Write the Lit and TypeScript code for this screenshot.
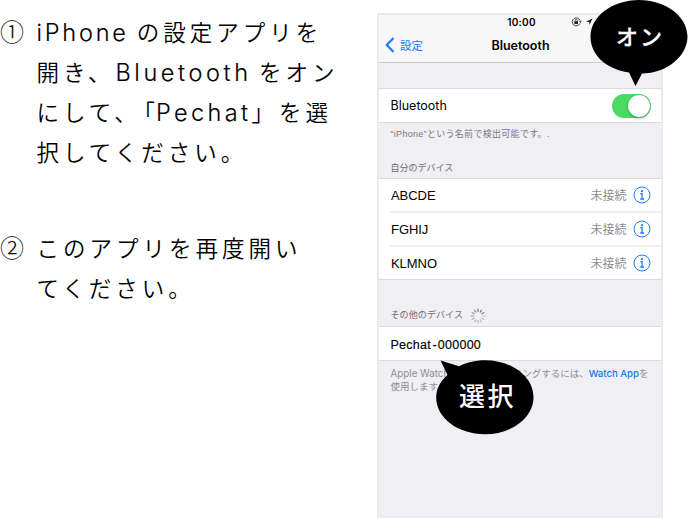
import { LitElement, html, css, svg } from "lit";
import { customElement, property } from "lit/decorators.js";

@customElement("speech-bubble")
class SpeechBubble extends LitElement {
  @property() kind = "on";
  static styles = css`
    :host { display: block; position: relative; color: #fff; }
    svg { display: block; }
    .label { position: absolute; inset: 0; display: flex; justify-content: center; line-height: 32px; font-weight: 500; white-space: nowrap; }
    .on { padding-top: 22px; padding-left: 2px; font-size: 22px; letter-spacing: 2px; -webkit-text-stroke: .3px #fff; }
    .select { padding-top: 21px; padding-left: 5px; font-size: 26px; letter-spacing: 2.500px; }
  `;
  render() {
    return this.kind === "on"
      ? html`<svg width="98" height="87" viewBox="0 0 98 87">
            <path d="M49 0C76 0 97.5 16.5 97.5 36.5S76 73.5 52 73.5L45.500 86L39 72.500C16 69 .5 55 .5 36.500C.5 16.500 22 0 49 0Z" />
          </svg><div class="label on">オン</div>`
      : html`<svg width="98" height="76" viewBox="0 0 98 76">
            <path d="M4.500 .5L23 6.300C30 2.500 39 .2 49 .2C76 .2 97.500 17 97.500 37.200S76 74.200 49 74.200S.2 58 .2 37.500C.2 28 5 20.500 11.500 15Z" />
          </svg><div class="label select">選択</div>`;
  }
}

@customElement("device-row")
class DeviceRow extends LitElement {
  @property() name = "";
  static styles = css`
    :host { display: flex; align-items: center; height: 32px; padding: 0 10px 0 12px; font-size: 13px; }
    .name { flex: 1; letter-spacing: -0.05px; }
    .state { color: #8e8e93; font-size: 12px; margin: -1px 6.500px 0 0; }
    svg { display: block; }
  `;
  render() {
    return html`<span class="name">${this.name}</span><span class="state">未接続</span>
      <svg width="18" height="18" viewBox="0 0 18 18" fill="none" stroke="#1a7dff">
        <circle cx="9" cy="9" r="8" />
        <circle cx="9" cy="5.200" r="1.100" fill="#1a7dff" stroke="none" />
        <path d="M7.300 7.700H9.100V13M7.200 13H11" stroke-width="1.300" />
      </svg>`;
  }
}

@customElement("app-root")
class AppRoot extends LitElement {
  static styles = css`
    :host { display: block; position: relative; width: 688px; height: 518px; overflow: hidden; background: #fff; color: #000;
      font-family: "Liberation Sans", "Noto Sans CJK JP", sans-serif; }
    .page { display: flex; }
    .steps { width: 377px; padding-top: 11px; flex: none; }
    .step { display: flex; font: 350 22.500px/40px "Noto Sans CJK JP", sans-serif; letter-spacing: 4px; white-space: nowrap; margin-bottom: 56px; }
    .num { width: 36.500px; flex: none; letter-spacing: 0; font-size: 24px; font-weight: 300; }
    .line { display: block; height: 40px; }
    .lat { font-family: Inter, "Liberation Sans", sans-serif; font-size: 23.500px; font-weight: 300; -webkit-text-stroke: .15px #000; }
    .l1 { letter-spacing: 2.800px; }
    .l2 { letter-spacing: 3.600px; margin-left: 1px; }
    .l3 { letter-spacing: 3.400px; margin-left: 1px; }
    .a1 { margin-left: -1px; }
    .a2 { margin-left: -1.500px; }
    .a3 { margin-left: 1px; }
    .open { font-feature-settings: "halt"; margin-left: 3px; letter-spacing: 0; }
    .phone { box-sizing: border-box; width: 286px; height: 505px; margin-top: 13px; border: 2px solid #ebebeb; background: #efeff4; }
    .nav { height: 47px; background: #f7f7f8; border-bottom: 1px solid #cdcdd1; }
    .status { position: relative; height: 14px; font: 600 10px/14px Inter, sans-serif; letter-spacing: .3px; text-align: center; text-indent: 3px; }
    .status svg { position: absolute; left: 192px; top: 1px; }
    .bar { display: grid; grid-template-columns: 1fr auto 1fr; align-items: center; height: 32px; }
    .back { display: flex; align-items: center; gap: 5px; padding-left: 6px; color: #1a7dff; font-size: 11.500px; }
    .title { font: 600 12.500px/30px Inter, sans-serif; padding: 1px 0 0 1px; }
    .gap { height: 25px; }
    .group { background: #fff; border: solid #dcdce0; border-width: 1px 0; }
    .single { height: 33px; display: flex; align-items: center; padding: 0 10px 0 11.500px; font: 12.500px Inter, sans-serif; }
    .single span { flex: 1; }
    .single .found { font: 12.500px "Liberation Sans", sans-serif; letter-spacing: .25px; padding-top: 2px; -webkit-text-stroke: .15px #000; }
    .found i { font-style: normal; margin: 0 1px 0 1.500px; }
    .switch { width: 39px; height: 24px; border-radius: 12px; background: #4cd964; display: flex; justify-content: flex-end; box-sizing: border-box; padding: 1px; }
    .knob { width: 22px; height: 22px; border-radius: 50%; background: #fff; box-shadow: 0 2px 3px #0003, 0 0 1px #0005; }
    .note { color: #7b7b80; font-size: 9px; line-height: 13px; height: 25px; padding: 5px 0 0 11.500px; letter-spacing: .3px; }
    .head { color: #6d6d72; font-size: 9px; line-height: 14px; padding-left: 11.500px; display: flex; align-items: center; gap: 7px; }
    .own { height: 25px; align-items: flex-start; }
    .own span { padding-top: 8px; }
    .other { height: 22px; padding-top: 24px; }
    .other span { letter-spacing: .1px; }
    .other svg { margin-top: 2px; }
    .sep { height: 2px; margin-left: 11px; background: #efeff0; }
    .watch { color: #8e8e93; font-size: 9.500px; line-height: 13px; padding: 6px 0 0 11.500px; white-space: nowrap; }
    .watch .txt { display: flex; }
    .apple { font: 9.800px/13px Inter, sans-serif; }
    .end { margin-left: auto; padding-right: 12.500px; }
    .end b { color: #0879ff; font: 500 9.600px/13px Inter, sans-serif; }
    .on-bubble { position: absolute; left: 590px; top: 0; }
    .select-bubble { position: absolute; left: 436px; top: 360px; }
  `;
  render() {
    return html`
      <div class="page">
        <div class="steps">
          <div class="step"><span class="num">①</span><div>
            <span class="line"><span class="lat l1">iPhone</span><span class="a1"> の設定アプリを</span></span>
            <span class="line">開き、<span class="lat l2">Bluetooth</span><span class="a2"> をオン</span></span>
            <span class="line">にして、<span class="open">「</span><span class="lat l3">Pechat</span>」<span class="a3">を選</span></span>
            <span class="line">択してください。</span>
          </div></div>
          <div class="step"><span class="num">②</span><div>
            <span class="line">このアプリを再度開い</span>
            <span class="line">てください。</span>
          </div></div>
        </div>
        <div class="phone">
          <div class="nav">
            <div class="status">10:00
              <svg width="24" height="12" viewBox="0 0 24 12" fill="none" stroke="#222">
                <path d="M8.900 7.500A4 4 0 1 1 9 4.500M7.800 5.200L9.500 6.600L10 4.600" stroke-width=".8" />
                <rect x="3.400" y="5.200" width="3.600" height="2.800" fill="#222" stroke="none" /><path d="M4.200 5.300V4.200A1 1 0 0 1 6.200 4.200V5.300" stroke-width=".7" />
                <path d="M21.500 2.500L15 5.800L18.300 6V9.200Z" fill="#111" stroke="none" />
              </svg>
            </div>
            <div class="bar">
              <div class="back"><svg width="10" height="16" viewBox="0 0 10 16"><path d="M8.500 1L1.800 8L8.500 15" fill="none" stroke="#1a7dff" stroke-width="2.200" /></svg>設定</div>
              <div class="title">Bluetooth</div><div></div>
            </div>
          </div>
          <div class="gap"></div>
          <div class="group single"><span>Bluetooth</span><div class="switch"><div class="knob"></div></div></div>
          <div class="note">“iPhone”という名前で検出可能です。.</div>
          <div class="head own"><span>自分のデバイス</span></div>
          <div class="group">
            <device-row name="ABCDE"></device-row><div class="sep"></div>
            <device-row name="FGHIJ"></device-row><div class="sep"></div>
            <device-row name="KLMNO"></device-row>
          </div>
          <div class="head other"><span>その他のデバイス</span>
            <svg width="16" height="16" viewBox="-8 -8 16 16" stroke="#66666a" stroke-width="1">
              ${Array.from({ length: 12 }, (_, i) => svg`<path d="M0 -4V-7.300" transform="rotate(${i * 30})" opacity=${[1, 1, 0.9, 0.35, 0.35, 0.4, 0.45, 0.5, 0.55, 0.65, 0.7, 0.8][i]} />`)}
            </svg>
          </div>
          <div class="group single"><span class="found">Pechat<i>-</i>000000</span></div>
          <div class="watch"><div class="txt"><span class="apple">Apple Watch</span><span class="end">とペアリングするには、<b>Watch App</b>を</span></div><div>使用します。</div></div>
        </div>
      </div>
      <speech-bubble class="on-bubble" kind="on"></speech-bubble>
      <speech-bubble class="select-bubble" kind="select"></speech-bubble>
    `;
  }
}
